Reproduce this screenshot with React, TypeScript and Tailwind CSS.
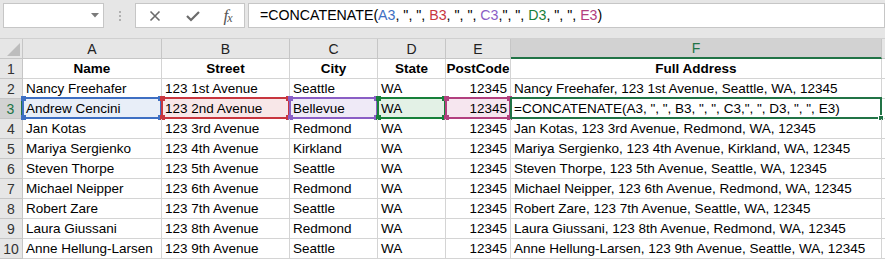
import React from "react";

type Range = { border: string; fill: string; handle: string };

const ranges: Record<number, Range> = {
  0: { border: "border-[#3e6fc3]", fill: "bg-[#e8eef8]", handle: "bg-[#3e6fc3]" },
  1: { border: "border-[#c8363f]", fill: "bg-[#f8e7e8]", handle: "bg-[#c8363f]" },
  2: { border: "border-[#8a5ec5]", fill: "bg-[#efeaf7]", handle: "bg-[#8a5ec5]" },
  3: { border: "border-[#17803a]", fill: "bg-[#e3f1e6]", handle: "bg-[#17803a]" },
  4: { border: "border-[#b2407f]", fill: "bg-[#f6e6ef]", handle: "bg-[#b2407f]" },
};

const colWidths = ["w-[139px]", "w-[128px]", "w-[88px]", "w-[68px]", "w-[65px]", "w-[371px]"];
const letters = ["A", "B", "C", "D", "E", "F"];

const data: string[][] = [
  ["Nancy Freehafer", "123 1st Avenue", "Seattle", "WA", "12345", "Nancy Freehafer, 123 1st Avenue, Seattle, WA, 12345"],
  ["Andrew Cencini", "123 2nd Avenue", "Bellevue", "WA", "12345", "__FORMULA__"],
  ["Jan Kotas", "123 3rd Avenue", "Redmond", "WA", "12345", "Jan Kotas, 123 3rd Avenue, Redmond, WA, 12345"],
  ["Mariya Sergienko", "123 4th Avenue", "Kirkland", "WA", "12345", "Mariya Sergienko, 123 4th Avenue, Kirkland, WA, 12345"],
  ["Steven Thorpe", "123 5th Avenue", "Seattle", "WA", "12345", "Steven Thorpe, 123 5th Avenue, Seattle, WA, 12345"],
  ["Michael Neipper", "123 6th Avenue", "Redmond", "WA", "12345", "Michael Neipper, 123 6th Avenue, Redmond, WA, 12345"],
  ["Robert Zare", "123 7th Avenue", "Seattle", "WA", "12345", "Robert Zare, 123 7th Avenue, Seattle, WA, 12345"],
  ["Laura Giussani", "123 8th Avenue", "Redmond", "WA", "12345", "Laura Giussani, 123 8th Avenue, Redmond, WA, 12345"],
  ["Anne Hellung-Larsen", "123 9th Avenue", "Seattle", "WA", "12345", "Anne Hellung-Larsen, 123 9th Avenue, Seattle, WA, 12345"],
];

function Formula({ colored }: { colored: boolean }) {
  const c = (cls: string) => (colored ? cls : "");
  return (
    <span className="whitespace-pre">
      =CONCATENATE(<span className={c("text-[#3e6fc3]")}>A3</span>, ", ",{" "}
      <span className={c("text-[#c8363f]")}>B3</span>, ", ",{" "}
      <span className={c("text-[#8a5ec5]")}>C3</span>,", ",{" "}
      <span className={c("text-[#17803a]")}>D3</span>, ", ",{" "}
      <span className={c("text-[#b2407f]")}>E3</span>)
    </span>
  );
}

function Handles({ cls }: { cls: string }) {
  return (
    <>
      <div className={`absolute -left-[3px] -top-[3px] w-[5px] h-[5px] ${cls}`} />
      <div className={`absolute -right-[3px] -top-[3px] w-[5px] h-[5px] ${cls}`} />
      <div className={`absolute -left-[3px] -bottom-[3px] w-[5px] h-[5px] ${cls}`} />
      <div className={`absolute -right-[3px] -bottom-[3px] w-[5px] h-[5px] ${cls}`} />
    </>
  );
}

export default function App() {
  return (
    <div className="w-[885px] h-[259px] overflow-hidden bg-white font-['Liberation_Sans',Arial,sans-serif] text-[13.5px] text-black">
      {/* Toolbar */}
      <div className="h-[39px] bg-[#e6e6e6] flex items-start pt-[3px] pl-[3px] border-b border-[#d0d0d0]">
        <div className="w-[101px] h-[25px] bg-white border border-[#c6c6c6] flex items-center justify-end pr-[4px]">
          <svg width="8" height="5" viewBox="0 0 8 5">
            <path d="M0 0 L8 0 L4 4.5 Z" fill="#7a7a7a" />
          </svg>
        </div>
        <div className="w-[31px] h-[25px] flex flex-col items-center justify-center gap-[2px]">
          <div className="w-[2px] h-[2px] bg-[#b0b0b0]" />
          <div className="w-[2px] h-[2px] bg-[#b0b0b0]" />
          <div className="w-[2px] h-[2px] bg-[#b0b0b0]" />
        </div>
        <div className="w-[110px] h-[25px] bg-white border border-[#c6c6c6] flex items-center">
          <div className="w-[38px] flex justify-center">
            <svg width="12" height="12" viewBox="0 0 12 12">
              <path d="M1.5 1.5 L10.5 10.5 M10.5 1.5 L1.5 10.5" stroke="#6b6b6b" strokeWidth="1.6" />
            </svg>
          </div>
          <div className="w-[38px] flex justify-center">
            <svg width="14" height="12" viewBox="0 0 14 12">
              <path d="M1 6 L5 10 L13 2" stroke="#6b6b6b" strokeWidth="2.2" fill="none" />
            </svg>
          </div>
          <div className="w-[32px] flex justify-center items-end font-['Liberation_Serif',serif] italic text-[#555] text-[17px] leading-none">
            f<span className="text-[12px] -ml-[1px]">x</span>
          </div>
        </div>
        <div className="ml-[3px] flex-1 h-[25px] bg-white border border-[#c6c6c6] flex items-center pl-[11px] text-[14.2px]">
          <Formula colored />
        </div>
      </div>

      {/* Column header row */}
      <div className="flex h-[20px]">
        <div className="w-[23px] h-[20px] bg-[#e6e6e6] border-r border-b border-[#c6c6c6] relative">
          <svg className="absolute right-[2px] bottom-[2px]" width="13" height="13" viewBox="0 0 13 13">
            <path d="M13 0 L13 13 L0 13 Z" fill="#bdbdbd" />
          </svg>
        </div>
        {letters.map((l, i) =>
          i === 5 ? (
            <div
              key={l}
              className={`${colWidths[i]} h-[20px] pt-[1px] bg-[#d2d2d2] border-r border-[#c6c6c6] border-b-2 border-b-[#217346] flex items-center justify-center text-[#217346] text-[14px]`}
            >
              {l}
            </div>
          ) : (
            <div
              key={l}
              className={`${colWidths[i]} h-[20px] pt-[2px] bg-[#e6e6e6] border-r border-b border-[#c6c6c6] flex items-center justify-center text-[#222] text-[14px]`}
            >
              {l}
            </div>
          )
        )}
        <div className="flex-1 h-[20px] bg-[#e6e6e6] border-b border-[#c6c6c6]" />
      </div>

      {/* Row 1: headers */}
      <div className="flex h-[20px]">
        <div className="w-[23px] h-[20px] pt-[2px] bg-[#e6e6e6] border-r border-b border-[#c6c6c6] flex items-center justify-center text-[#333] text-[14px]">
          1
        </div>
        {["Name", "Street", "City", "State", "PostCode", "Full Address"].map((h, i) => (
          <div
            key={h}
            className={`${colWidths[i]} h-[20px] pt-[2px] border-r border-b border-[#d4d4d4] flex items-center justify-center font-bold`}
          >
            {h}
          </div>
        ))}
        <div className="flex-1 h-[20px] border-b border-[#d4d4d4]" />
      </div>

      {data.map((row, r) => {
        const rowNum = r + 2;
        const active = rowNum === 3;
        return (
          <div key={rowNum} className="flex h-[20px]">
            <div
              className={`w-[23px] h-[20px] pt-[2px] border-b border-[#c6c6c6] flex items-center justify-center text-[14px] ${
                active
                  ? "bg-[#d2d2d2] text-[#217346] border-r-2 border-r-[#217346]"
                  : "bg-[#e6e6e6] text-[#333] border-r border-r-[#c6c6c6]"
              }`}
            >
              {rowNum}
            </div>
            {row.map((v, i) => {
              const rng = active && i < 5 ? ranges[i] : null;
              const isF = active && i === 5;
              return (
                <div
                  key={i}
                  className={`${colWidths[i]} h-[20px] pt-[2px] border-r border-b border-[#d4d4d4] relative flex items-center whitespace-nowrap ${
                    i === 4 ? "justify-end pr-[3px]" : "pl-[3px]"
                  } ${rng ? rng.fill : ""}`}
                >
                  {v === "__FORMULA__" ? <Formula colored={false} /> : v}
                  {rng && (
                    <div className={`absolute -top-[2px] -left-[1px] -right-[1px] -bottom-[1px] border-2 ${rng.border}`}>
                      <Handles cls={rng.handle} />
                    </div>
                  )}
                  {isF && (
                    <div className="absolute -top-[2px] -left-[1px] -right-[1px] -bottom-[1px] border-2 border-[#217346]">
                      <div className="absolute -right-[4px] -bottom-[4px] w-[6px] h-[6px] bg-[#217346] border border-white" />
                    </div>
                  )}
                </div>
              );
            })}
            <div className="flex-1 h-[20px] border-b border-[#d4d4d4]" />
          </div>
        );
      })}
    </div>
  );
}
